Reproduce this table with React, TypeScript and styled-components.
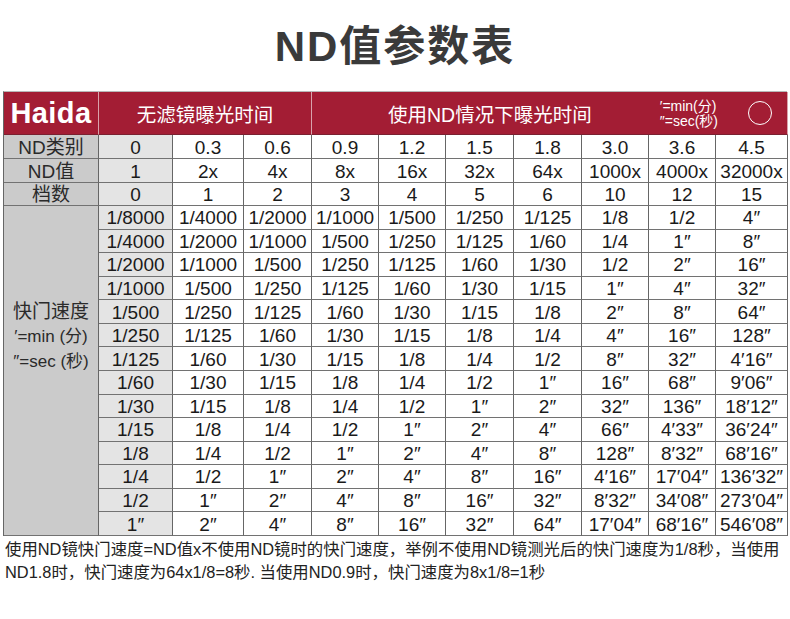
import React from "react"
import styled, { createGlobalStyle } from "styled-components"

const GlobalStyle = createGlobalStyle`
  body {
    margin: 0;
    background: #ffffff;
    font-family: "Liberation Sans", "Noto Sans CJK SC", sans-serif;
    color: #222;
  }
`

const Page = styled.div`
  width: 790px;
  height: 619px;
  padding: 0 3px;
  box-sizing: border-box;
  overflow: hidden;
`

const Title = styled.h1`
  height: 84px;
  margin: 0 0 7px;
  display: flex;
  align-items: center;
  justify-content: center;
  font-family: "Liberation Sans", "Noto Sans CJK SC", sans-serif;
  font-size: 42px;
  font-weight: 700;
  letter-spacing: 2px;
  color: #3a3a3a;
`

const Table = styled.div`
  display: grid;
  grid-template-columns: 95px 74px 71px 68px 67px 67px 68px 68px 67px 67px 72px;
  grid-template-rows: 43px 24px 24px 23px repeat(14, 23.57px);
  border-left: 1px solid #666;
  border-top: 1px solid #b8b8b8;
`

const Cell = styled.div<{ $tone?: "label" | "first" | "plain" }>`
  box-sizing: border-box;
  display: flex;
  align-items: center;
  justify-content: center;
  border-right: 1px solid #666;
  border-bottom: 1px solid #727272;
  background: ${(p) =>
    p.$tone === "label" ? "#cbcbcb" : p.$tone === "first" ? "#e4e4e4" : "#ffffff"};
  font-size: 19px;
  color: #1a1a1a;
  white-space: nowrap;
  line-height: 1;
  padding-top: 1px;
`

const RowLabel = styled(Cell)`
  font-size: 19px;
  color: #2a2a2a;
`

const HeadCell = styled.div<{ $span: number }>`
  grid-column: span ${(p) => p.$span};
  box-sizing: border-box;
  display: flex;
  align-items: center;
  background: #a31d34;
  color: #ffffff;
  border-right: 1px solid #d9a2ab;
  border-bottom: 1px solid #7a2030;
  font-size: 19.5px;
  white-space: nowrap;
`

const Logo = styled(HeadCell)`
  justify-content: center;
  font-size: 29px;
  font-weight: 700;
  letter-spacing: 0.4px;
`

const HeadTitle = styled.span<{ $indent?: number }>`
  padding-left: ${(p) => p.$indent ?? 0}px;
`

const Legend = styled.div`
  margin-left: auto;
  display: flex;
  flex-direction: column;
  font-size: 14px;
  line-height: 15px;
  padding-top: 1px;
`

const Circle = styled.span`
  width: 22px;
  height: 22px;
  border: 1.5px solid #ffffff;
  border-radius: 50%;
  margin: 0 15px 0 30px;
`

const ShutterLabel = styled(Cell)`
  grid-row: span 14;
  flex-direction: column;
  gap: 9px;
  padding: 0 0 66px;
  color: #2a2a2a;
  line-height: 16px;
`

const ShutterTitle = styled.span`
  font-size: 19px;
`

const ShutterNote = styled.span`
  font-size: 17px;
`

const Footer = styled.p`
  margin: 2px 0 0;
  padding-left: 2px;
  font-size: 16.4px;
  line-height: 23px;
  color: #222;
  letter-spacing: 0;
  white-space: nowrap;
`

const ndType = ["0", "0.3", "0.6", "0.9", "1.2", "1.5", "1.8", "3.0", "3.6", "4.5"]
const ndValue = ["1", "2x", "4x", "8x", "16x", "32x", "64x", "1000x", "4000x", "32000x"]
const stops = ["0", "1", "2", "3", "4", "5", "6", "10", "12", "15"]

const shutter = [
  ["1/8000", "1/4000", "1/2000", "1/1000", "1/500", "1/250", "1/125", "1/8", "1/2", "4″"],
  ["1/4000", "1/2000", "1/1000", "1/500", "1/250", "1/125", "1/60", "1/4", "1″", "8″"],
  ["1/2000", "1/1000", "1/500", "1/250", "1/125", "1/60", "1/30", "1/2", "2″", "16″"],
  ["1/1000", "1/500", "1/250", "1/125", "1/60", "1/30", "1/15", "1″", "4″", "32″"],
  ["1/500", "1/250", "1/125", "1/60", "1/30", "1/15", "1/8", "2″", "8″", "64″"],
  ["1/250", "1/125", "1/60", "1/30", "1/15", "1/8", "1/4", "4″", "16″", "128″"],
  ["1/125", "1/60", "1/30", "1/15", "1/8", "1/4", "1/2", "8″", "32″", "4′16″"],
  ["1/60", "1/30", "1/15", "1/8", "1/4", "1/2", "1″", "16″", "68″", "9′06″"],
  ["1/30", "1/15", "1/8", "1/4", "1/2", "1″", "2″", "32″", "136″", "18′12″"],
  ["1/15", "1/8", "1/4", "1/2", "1″", "2″", "4″", "66″", "4′33″", "36′24″"],
  ["1/8", "1/4", "1/2", "1″", "2″", "4″", "8″", "128″", "8′32″", "68′16″"],
  ["1/4", "1/2", "1″", "2″", "4″", "8″", "16″", "4′16″", "17′04″", "136′32″"],
  ["1/2", "1″", "2″", "4″", "8″", "16″", "32″", "8′32″", "34′08″", "273′04″"],
  ["1″", "2″", "4″", "8″", "16″", "32″", "64″", "17′04″", "68′16″", "546′08″"],
]

const ValueRow = ({ values }: { values: string[] }) => (
  <>
    {values.map((v, i) => (
      <Cell key={i} $tone={i === 0 ? "first" : "plain"}>
        {v}
      </Cell>
    ))}
  </>
)

export default function App() {
  return (
    <Page>
      <GlobalStyle />
      <Title>ND值参数表</Title>
      <Table>
        <Logo $span={1}>Haida</Logo>
        <HeadCell $span={3} style={{ justifyContent: "center" }}>
          <HeadTitle>无滤镜曝光时间</HeadTitle>
        </HeadCell>
        <HeadCell $span={7}>
          <HeadTitle $indent={76}>使用ND情况下曝光时间</HeadTitle>
          <Legend>
            <span>′=min(分)</span>
            <span>″=sec(秒)</span>
          </Legend>
          <Circle />
        </HeadCell>

        <RowLabel $tone="label">ND类别</RowLabel>
        <ValueRow values={ndType} />
        <RowLabel $tone="label">ND值</RowLabel>
        <ValueRow values={ndValue} />
        <RowLabel $tone="label">档数</RowLabel>
        <ValueRow values={stops} />

        {shutter.map((row, r) => (
          <React.Fragment key={r}>
            {r === 0 && (
              <ShutterLabel $tone="label">
                <ShutterTitle>快门速度</ShutterTitle>
                <ShutterNote>′=min (分)</ShutterNote>
                <ShutterNote>″=sec (秒)</ShutterNote>
              </ShutterLabel>
            )}
            <ValueRow values={row} />
          </React.Fragment>
        ))}
      </Table>
      <Footer>
        使用ND镜快门速度=ND值x不使用ND镜时的快门速度，举例不使用ND镜测光后的快门速度为1/8秒，当使用
        <br />
        ND1.8时，快门速度为64x1/8=8秒. 当使用ND0.9时，快门速度为8x1/8=1秒
      </Footer>
    </Page>
  )
}
